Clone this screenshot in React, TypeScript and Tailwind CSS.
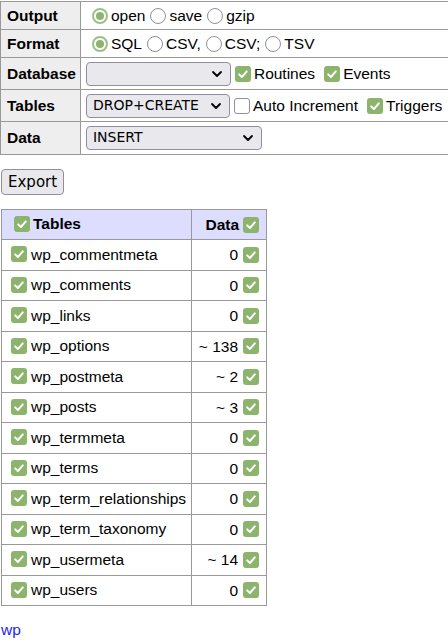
import React from 'react';

const TABLES: { name: string; rows: string }[] = [
    { name: 'wp_commentmeta', rows: '0' },
    { name: 'wp_comments', rows: '0' },
    { name: 'wp_links', rows: '0' },
    { name: 'wp_options', rows: '~ 138' },
    { name: 'wp_postmeta', rows: '~ 2' },
    { name: 'wp_posts', rows: '~ 3' },
    { name: 'wp_termmeta', rows: '0' },
    { name: 'wp_terms', rows: '0' },
    { name: 'wp_term_relationships', rows: '0' },
    { name: 'wp_term_taxonomy', rows: '0' },
    { name: 'wp_usermeta', rows: '~ 14' },
    { name: 'wp_users', rows: '0' },
];

const Check: React.FC<{ on?: boolean }> = ({ on = true }) =>
    on ? (
        <span className="inline-flex w-[16px] h-[16px] rounded-[3px] bg-[#8db46d] items-center justify-center align-[-3px] shrink-0">
            <svg width="12" height="12" viewBox="0 0 12 12">
                <path d="M2.2 6.4 L4.9 9 L9.8 3.4" fill="none" stroke="white" strokeWidth="2" strokeLinecap="round" strokeLinejoin="round" />
            </svg>
        </span>
    ) : (
        <span className="inline-block w-[16px] h-[16px] rounded-[3px] border border-[#8f8f9d] bg-white align-[-3px] shrink-0" />
    );

const Radio: React.FC<{ on?: boolean }> = ({ on }) =>
    on ? (
        <span className="inline-flex w-[16px] h-[16px] rounded-full border-2 border-[#9cc089] bg-white items-center justify-center align-[-3px] shrink-0">
            <span className="w-[8px] h-[8px] rounded-full bg-[#8db46d]" />
        </span>
    ) : (
        <span className="inline-block w-[16px] h-[16px] rounded-full border border-[#8f8f9d] bg-white align-[-3px] shrink-0" />
    );

const Select: React.FC<{ value: string; width: string }> = ({ value, width }) => (
    <span className={`inline-flex items-center justify-between h-[24px] ${width} px-[6px] rounded-[4px] border border-[#8f8f9d] bg-[#e9e9ed] text-[14px] font-['DejaVu_Sans',sans-serif] text-black`}>
        <span>{value}</span>
        <svg width="12" height="8" viewBox="0 0 12 8" className="mr-[1px]">
            <path d="M2 2 L6 6 L10 2" fill="none" stroke="black" strokeWidth="1.8" strokeLinecap="round" strokeLinejoin="round" />
        </svg>
    </span>
);

const Opt: React.FC<{ children: React.ReactNode }> = ({ children }) => (
    <span className="inline-flex items-center gap-[3px] mr-[5px]">{children}</span>
);

export default function App() {
    const th = 'border border-[#999] bg-[#eee] text-left font-bold pl-[6px] pr-[4px] w-[80px]';
    const td = 'border border-[#999] px-[5px] whitespace-nowrap';

    return (
        <div className="w-[448px] h-[640px] bg-white text-black text-[15.5px] leading-[1.25] font-['Liberation_Sans',Arial,sans-serif] overflow-hidden">
            <table className="border-collapse border border-[#999] w-[447px] mt-[1px]">
                <tbody>
                    <tr className="h-[28px]">
                        <th className={th}>Output</th>
                        <td className={td}>
                            <div className="flex items-center pl-[6px]">
                                <Opt><Radio on />open</Opt>
                                <Opt><Radio />save</Opt>
                                <Opt><Radio />gzip</Opt>
                            </div>
                        </td>
                    </tr>
                    <tr className="h-[28px]">
                        <th className={th}>Format</th>
                        <td className={td}>
                            <div className="flex items-center pl-[6px]">
                                <Opt><Radio on />SQL</Opt>
                                <Opt><Radio />CSV,</Opt>
                                <Opt><Radio />CSV;</Opt>
                                <Opt><Radio />TSV</Opt>
                            </div>
                        </td>
                    </tr>
                    <tr className="h-[32px]">
                        <th className={th}>Database</th>
                        <td className={td}>
                            <div className="flex items-center gap-[4px]">
                                <Select value="" width="w-[145px]" />
                                <Opt><Check />Routines</Opt>
                                <Opt><Check />Events</Opt>
                            </div>
                        </td>
                    </tr>
                    <tr className="h-[32px]">
                        <th className={th}>Tables</th>
                        <td className={td}>
                            <div className="flex items-center gap-[4px]">
                                <Select value="DROP+CREATE" width="w-[144px]" />
                                <Opt><Check on={false} />Auto Increment</Opt>
                                <Opt><Check />Triggers</Opt>
                            </div>
                        </td>
                    </tr>
                    <tr className="h-[33px]">
                        <th className={th}>Data</th>
                        <td className={td}>
                            <div className="flex items-center">
                                <Select value="INSERT" width="w-[176px]" />
                            </div>
                        </td>
                    </tr>
                </tbody>
            </table>

            <button className="mt-[14px] ml-[1px] h-[26px] px-[6px] rounded-[4px] border border-[#8f8f9d] bg-[#e9e9ed] text-[15px] font-['DejaVu_Sans',sans-serif] leading-none">
                Export
            </button>

            <table className="border-collapse border border-[#999] mt-[14px] ml-[1px]">
                <thead>
                    <tr className="h-[30px] bg-[#ddf]">
                        <th className="border border-[#999] text-left font-bold pl-[12px] pr-[5px] w-[190px]">
                            <span className="inline-flex items-center gap-[3px]"><Check />Tables</span>
                        </th>
                        <th className="border border-[#999] text-right font-bold px-[7px] w-[75px]">
                            <span className="inline-flex items-center gap-[4px]">Data<Check /></span>
                        </th>
                    </tr>
                </thead>
                <tbody>
                    {TABLES.map(t => (
                        <tr key={t.name} className="h-[30.5px]">
                            <td className="border border-[#999] pl-[9px] pr-[5px] whitespace-nowrap">
                                <span className="inline-flex items-center gap-[4px]"><Check />{t.name}</span>
                            </td>
                            <td className="border border-[#999] pr-[7px] text-right whitespace-nowrap">
                                <span className="inline-flex items-center gap-[5px]">{t.rows}<Check /></span>
                            </td>
                        </tr>
                    ))}
                </tbody>
            </table>

            <p className="mt-[14px] ml-[1px]">
                <a href="#" className="text-[#2222ff]">wp</a>
            </p>
        </div>
    );
}
